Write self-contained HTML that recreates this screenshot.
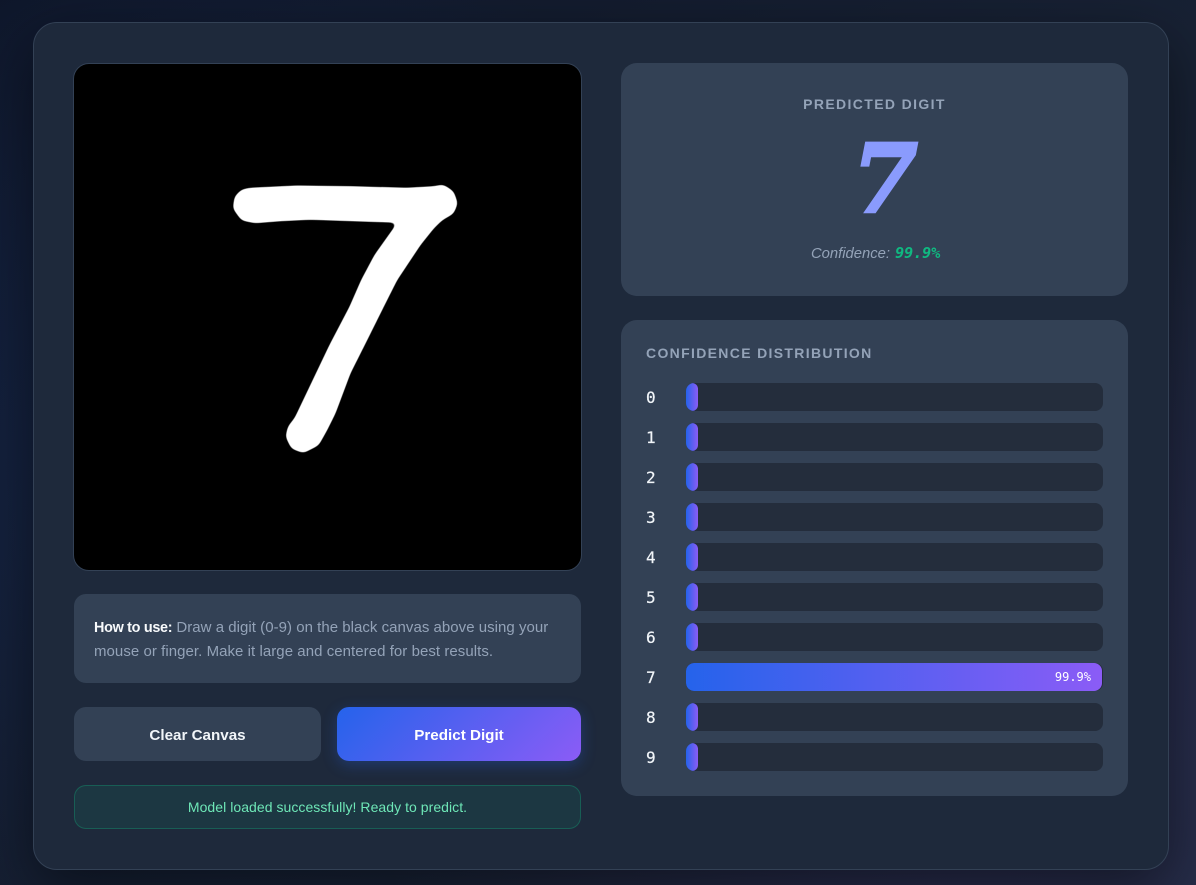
<!DOCTYPE html>
<html><head><meta charset="utf-8"><style>
*{box-sizing:border-box;margin:0;padding:0}
html,body{width:1196px;height:885px;overflow:hidden}
body{position:relative;background:radial-gradient(circle at 20% 50%,rgba(37,99,235,.15),transparent 50%),radial-gradient(circle at 80% 80%,rgba(139,92,246,.15),transparent 50%),linear-gradient(135deg,#0f172a,#1e293b);font-family:"Liberation Sans",sans-serif}
.shadow{position:absolute;left:33px;top:22px;width:1136px;height:848px;border-radius:24px;box-shadow:0 20px 60px rgba(0,0,0,.5)}
.a{position:absolute}
.t{position:absolute;white-space:nowrap}
.track{position:absolute;left:686px;width:417px;height:28px;background:#242d3c;border-radius:8px;overflow:hidden}
.fill{position:absolute;left:0;top:0;height:28px;width:12px;background:linear-gradient(90deg,#2563eb,#8b5cf6);border-radius:8px}
.n{position:absolute;left:646px;width:12px;font:16px/20px "DejaVu Sans Mono",monospace;color:#f1f5f9;-webkit-text-stroke:.2px #f1f5f9}
</style></head><body>
<div class="shadow"></div>
<div class="a" style="left:33px;top:22px;width:1136px;height:848px;background:#1e293b;border:1px solid #334155;border-radius:24px"></div>

<div class="a" style="left:73px;top:63px;width:509px;height:508px;background:#000;border:1px solid #334155;border-radius:16px;overflow:hidden"></div>
<svg class="a" style="left:73px;top:63px" width="509" height="508" viewBox="73 63 509 508">
<defs><filter id="sm" x="-5%" y="-5%" width="110%" height="110%" color-interpolation-filters="sRGB"><feGaussianBlur stdDeviation="2.8"/><feColorMatrix values="1 0 0 0 0 0 1 0 0 0 0 0 1 0 0 0 0 0 7 -3"/></filter></defs>
<path filter="url(#sm)" fill="#fff" stroke="#fff" stroke-width="1" stroke-linejoin="round" d="M250 188.3L296.7 186L353.3 186.7L406.7 188.3L433.3 186.7L443.3 185L453.3 191.7L457.3 203.3L453.3 213.3L441.7 220L433.3 228.3L420 245L406.7 265L396.7 280L383.3 306.7L366.7 340L350 373.3L335 413.3L326.7 430L318.3 445L303.3 452.7L291.7 448.3L286 436.7L288.3 426.7L295 418.3L313.3 380L330 345L350 306.7L361.7 280L375 255L398.3 222.3L353.3 220.7L310 219.3L280 220.7L255 222.7L241.7 220L233.3 208.3L235 196.7L241.7 190Z"/>
</svg>

<div class="a" style="left:74px;top:594px;width:507px;height:89px;background:#334155;border-radius:12px"></div>
<div class="t" style="left:94px;top:616px;font-size:15px;line-height:24px;color:#94a3b8"><b style="color:#f8fafc;font-size:14.4px;letter-spacing:-.3px">How to use:</b> <span style="letter-spacing:.03px">Draw a digit (0-9) on the black canvas above using your</span><br><span style="letter-spacing:.05px">mouse or finger. Make it large and centered for best results.</span></div>

<div class="a" style="left:74px;top:707px;width:247px;height:54px;background:#334155;border-radius:12px"></div>
<div class="t" style="left:74px;top:709px;width:247px;text-align:center;font:bold 15.2px/54px 'Liberation Sans',sans-serif;color:#f1f5f9">Clear Canvas</div>
<div class="a" style="left:337px;top:707px;width:244px;height:54px;background:linear-gradient(135deg,#2563eb,#8b5cf6);border-radius:12px;box-shadow:0 4px 15px rgba(37,99,235,.3)"></div>
<div class="t" style="left:337px;top:709px;width:244px;text-align:center;font:bold 15.2px/54px 'Liberation Sans',sans-serif;color:#fff">Predict Digit</div>

<div class="a" style="left:74px;top:785px;width:507px;height:44px;background:rgba(16,185,129,.1);border:1px solid rgba(16,185,129,.3);border-radius:12px"></div>
<div class="t" style="left:74px;top:785px;width:507px;text-align:center;font-size:14px;line-height:44px;color:#6ee7b7;letter-spacing:.05px">Model loaded successfully! Ready to predict.</div>

<div class="a" style="left:621px;top:63px;width:507px;height:233px;background:#334155;border-radius:16px"></div>
<div class="t" style="left:621px;top:95px;width:507px;text-align:center;font:bold 14px/18px 'Liberation Sans',sans-serif;letter-spacing:1.37px;color:#94a3b8">PREDICTED DIGIT</div>
<div class="t" style="left:835px;top:120px;width:100px;text-align:center;font:italic bold 95px/120px 'DejaVu Serif',serif;color:#8a9bfd;-webkit-text-stroke:2.5px #8a9bfd">7</div>
<div class="t" style="left:811px;top:243px;font:italic 14.8px/20px 'Liberation Sans',sans-serif;color:#94a3b8">Confidence: <span style="font:italic bold 15px/20px 'DejaVu Sans Mono',monospace;color:#10b981;margin-left:1px">99.9%</span></div>

<div class="a" style="left:621px;top:320px;width:507px;height:476px;background:#334155;border-radius:16px"></div>
<div class="t" style="left:646px;top:344px;font:bold 14px/18px 'Liberation Sans',sans-serif;letter-spacing:1.33px;color:#94a3b8">CONFIDENCE DISTRIBUTION</div>

<div class="n" style="top:388px">0</div><div class="track" style="top:383px"><div class="fill"></div></div>
<div class="n" style="top:428px">1</div><div class="track" style="top:423px"><div class="fill"></div></div>
<div class="n" style="top:468px">2</div><div class="track" style="top:463px"><div class="fill"></div></div>
<div class="n" style="top:508px">3</div><div class="track" style="top:503px"><div class="fill"></div></div>
<div class="n" style="top:548px">4</div><div class="track" style="top:543px"><div class="fill"></div></div>
<div class="n" style="top:588px">5</div><div class="track" style="top:583px"><div class="fill"></div></div>
<div class="n" style="top:628px">6</div><div class="track" style="top:623px"><div class="fill"></div></div>
<div class="n" style="top:668px">7</div><div class="track" style="top:663px"><div class="fill" style="width:416px"></div><div class="t" style="right:12px;top:0;font:12px/28px 'DejaVu Sans Mono',monospace;color:#fff">99.9%</div></div>
<div class="n" style="top:708px">8</div><div class="track" style="top:703px"><div class="fill"></div></div>
<div class="n" style="top:748px">9</div><div class="track" style="top:743px"><div class="fill"></div></div>
</body></html>
